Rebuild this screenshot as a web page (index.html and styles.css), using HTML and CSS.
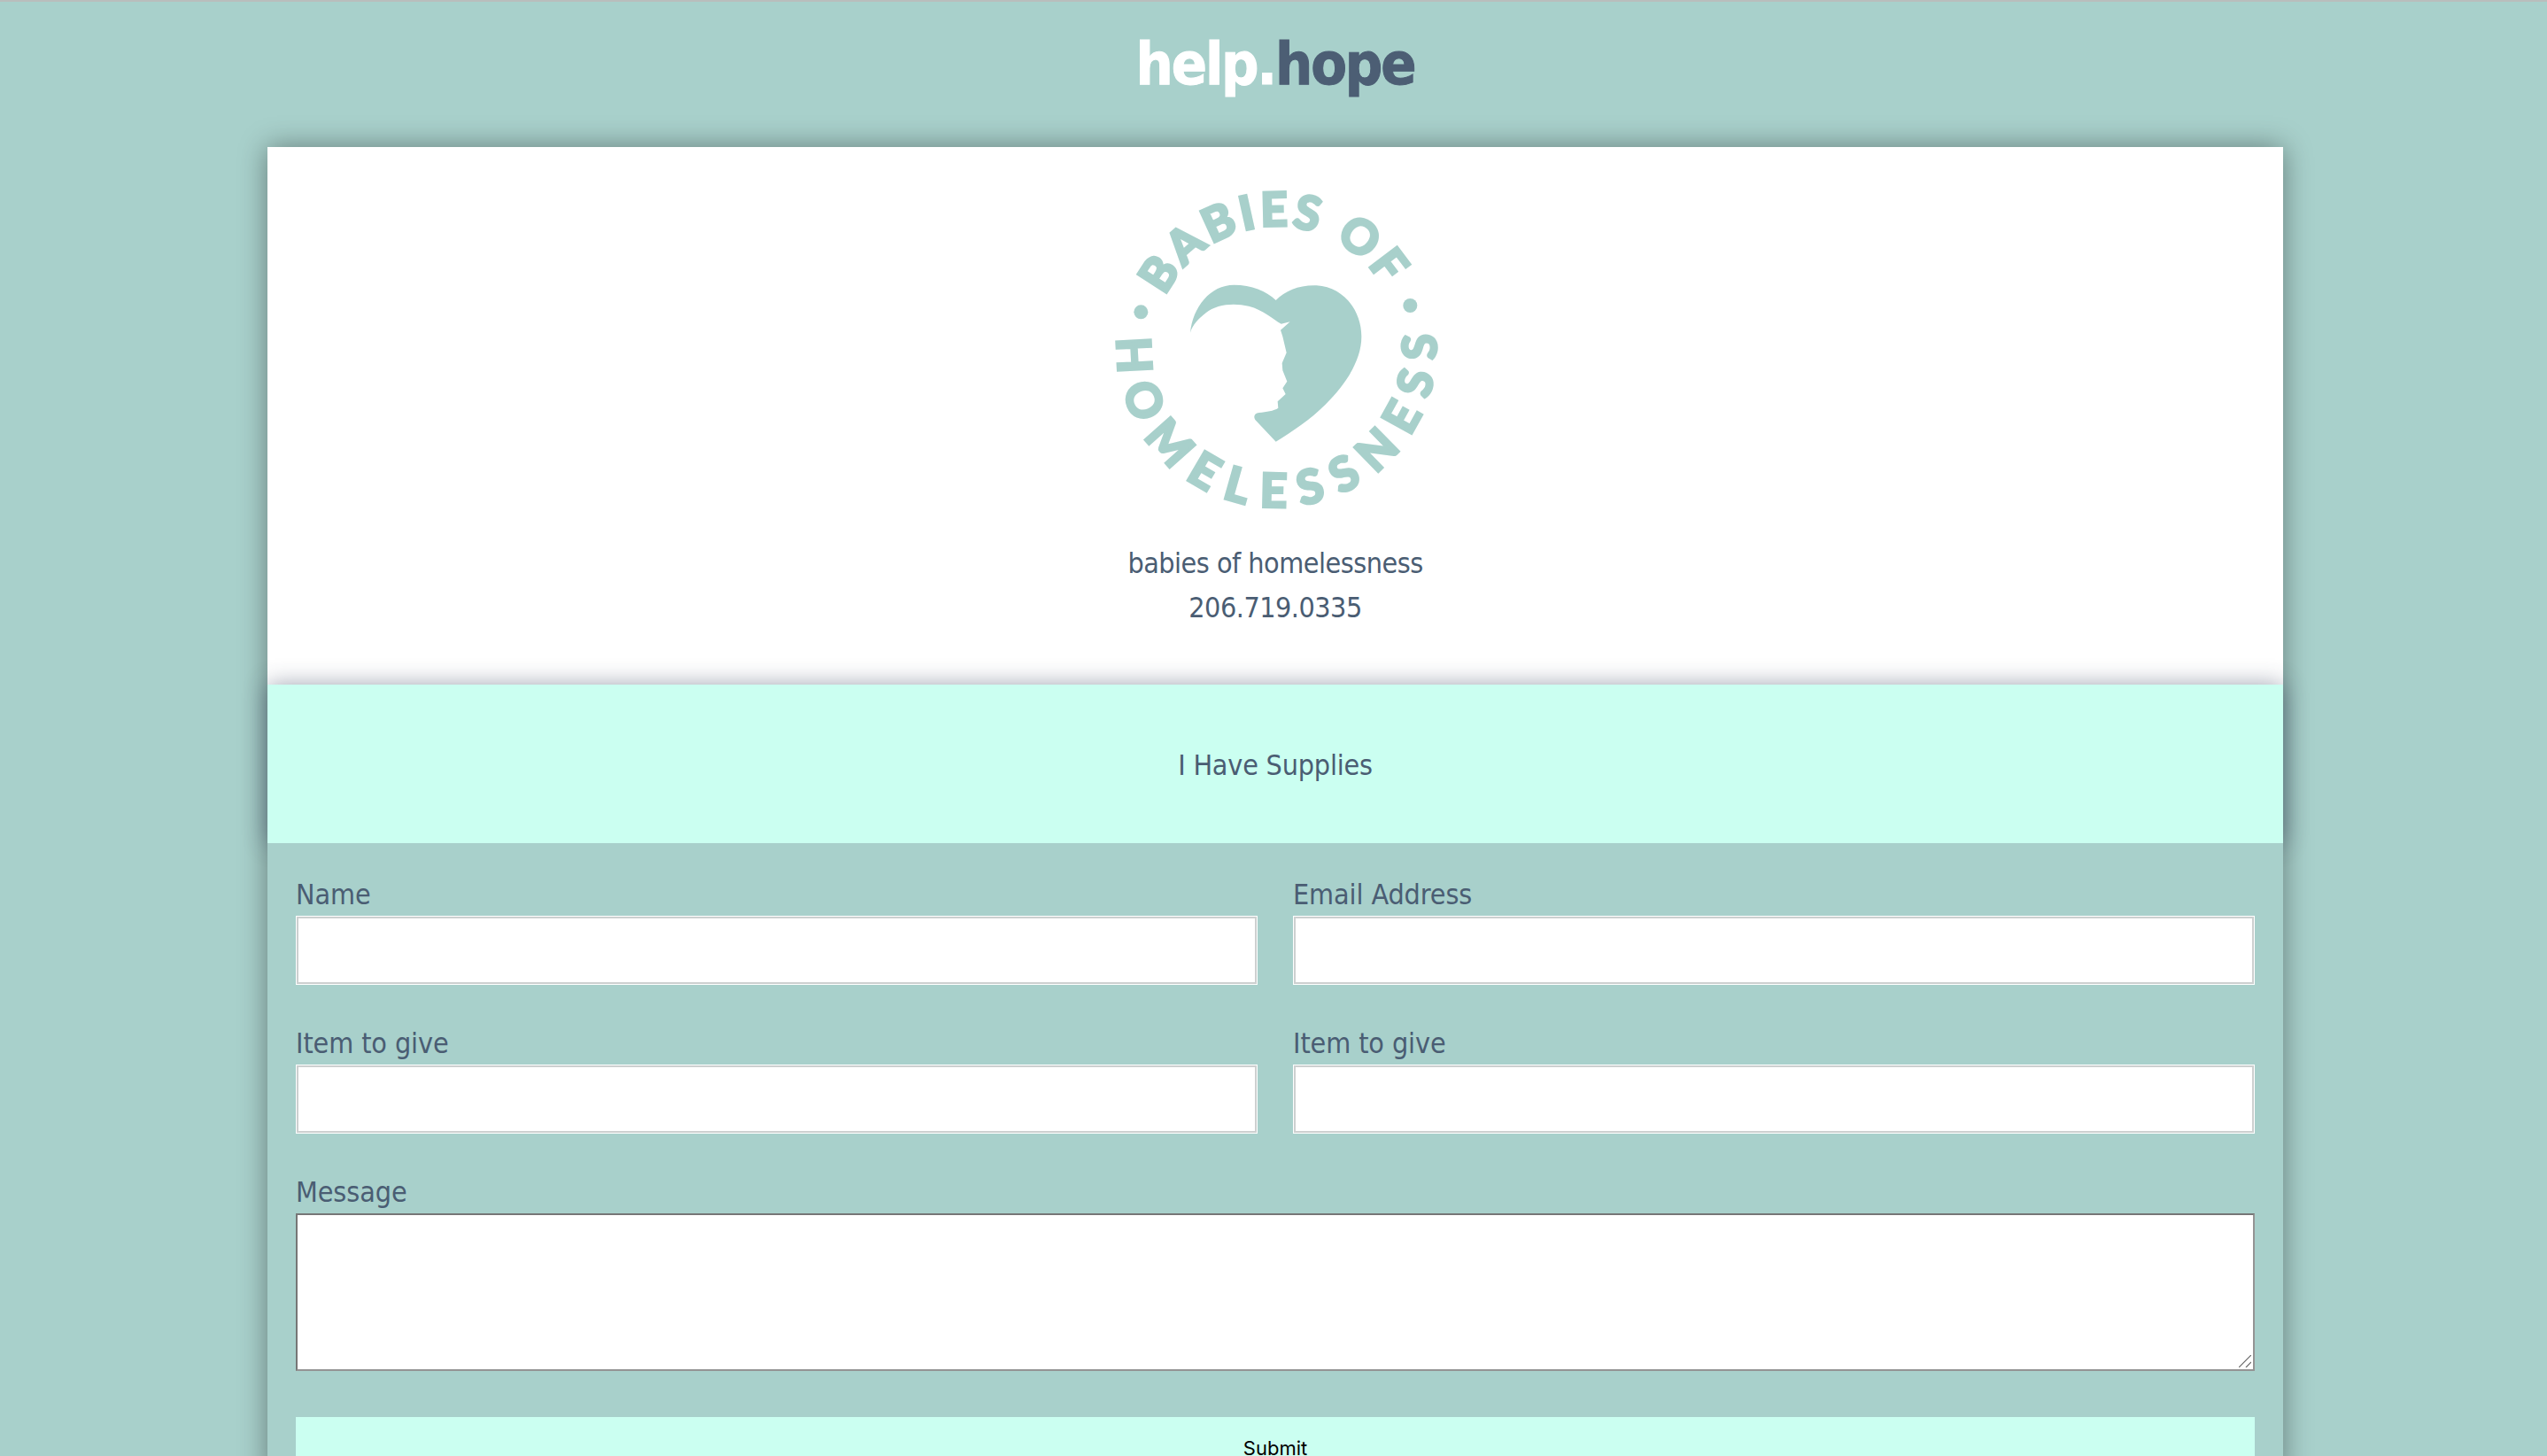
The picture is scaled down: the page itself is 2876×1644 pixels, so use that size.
FILE: index.html
```html
<!DOCTYPE html>
<html lang="en">
<head>
<meta charset="utf-8">
<title>help.hope</title>
<link rel="stylesheet" href="styles.css">
</head>
<body>
<header class="site-header"><h1 class="brand"><span class="brand-light">help.</span><span class="brand-dark">hope</span></h1></header>
<main class="card">
  <section class="org">
    <svg class="logo" viewBox="30 0 1200 1200" aria-label="Babies of Homelessness logo">
      <defs>
        <path id="arc-top" d="M257 433A420 420 0 0 1 995 399"/>
        <path id="arc-bottom" d="M96 575A540 540 0 1 0 1174 575"/>
      </defs>
      <text class="logo-text"><textPath href="#arc-top" textLength="903" lengthAdjust="spacing">BABIES OF</textPath></text>
      <text class="logo-text"><textPath href="#arc-bottom" textLength="1776" lengthAdjust="spacing">HOMELESSNESS</textPath></text>
      <circle class="logo-mark" cx="175" cy="487" r="24"/>
      <circle class="logo-mark" cx="1087" cy="465" r="24"/>
      <path class="logo-mark" d="M342 557C350 470 410 395 490 395C550 395 600 415 632 447C665 415 710 395 770 397C860 402 922 480 922 570C922 650 870 730 800 800C750 850 690 890 632 926L562 852C555 840 560 830 575 828C600 825 625 822 640 812L638 790L665 765L655 745L670 722L655 685L653 660L668 625L655 570L648 548L680 520L650 527C620 510 590 480 540 467C490 455 430 460 395 490C370 510 350 530 342 557Z"/>
    </svg>
    <p class="org-name">babies of homelessness</p>
    <p class="org-phone">206.719.0335</p>
  </section>
  <section class="band">I Have Supplies</section>
  <form class="form">
    <div class="field"><label class="label" for="f-name">Name</label><input class="input" id="f-name" type="text"></div>
    <div class="field"><label class="label" for="f-email">Email Address</label><input class="input" id="f-email" type="text"></div>
    <div class="field"><label class="label" for="f-item1">Item to give</label><input class="input" id="f-item1" type="text"></div>
    <div class="field"><label class="label" for="f-item2">Item to give</label><input class="input" id="f-item2" type="text"></div>
    <div class="field field-wide">
      <label class="label" for="f-msg">Message</label>
      <div class="textarea-wrap">
        <textarea class="textarea" id="f-msg"></textarea>
        <svg class="grip" viewBox="0 0 14 14" aria-hidden="true"><path d="M0 14L14 0M8 14L14 8"/></svg>
      </div>
    </div>
    <button class="submit" type="button">Submit</button>
  </form>
</main>
</body>
</html>
```
FILE: styles.css
```css
* { box-sizing: border-box; }
html, body { margin: 0; height: 1644px; overflow: hidden; }
body {
  background: #a8d0cb;
  border-top: 2px solid #b9bdbc;
  padding-left: 4px;
  font-family: "DejaVu Sans Condensed", "DejaVu Sans", sans-serif;
  color: #4a5d73;
}
.site-header { height: 164px; display: flex; justify-content: center; }
.brand {
  margin: 30px 0 0;
  font-size: 66px;
  line-height: 82px;
  font-weight: 700;
  height: 82px;
  letter-spacing: -2.1px;
  -webkit-text-stroke: 1px currentColor;
}
.brand-light { color: #fff; }
.brand-dark { color: #4c5e74; }
.card {
  width: 2276px;
  margin: 0 auto;
  background: #a8d0cb;
  box-shadow: 0 0 30px rgba(0, 0, 0, 0.4);
}
.org {
  background: #fff;
  height: 607px;
  padding-top: 24px;
  display: flex;
  flex-direction: column;
  align-items: center;
}
.logo { width: 400px; height: 400px; display: block; }
.logo-mark { fill: #a8d0cb; }
.logo-text {
  fill: #a8d0cb;
  stroke: #a8d0cb;
  stroke-width: 10px;
  font-family: "Lato", sans-serif;
  font-weight: 700;
  font-size: 158px;
}
.org-name, .org-phone { margin: 0; font-size: 32px; line-height: 50px; letter-spacing: -0.5px; }
.org-name { margin-top: 21px; }
.band {
  height: 179px;
  padding-top: 2px;
  background: #cbfff1;
  display: flex;
  align-items: center;
  justify-content: center;
  font-size: 32px;
  letter-spacing: -0.2px;
  box-shadow: 0 0 25px rgba(40, 50, 80, 0.45);
  position: relative;
}
.form {
  position: relative;
  background: #a8d0cb;
  padding: 40px 32px 0;
  display: grid;
  grid-template-columns: 1fr 1fr;
  column-gap: 40px;
  row-gap: 48px;
}
.field { display: flex; flex-direction: column; }
.field-wide { grid-column: 1 / -1; }
.label { font-size: 32px; line-height: 36px; height: 42px; letter-spacing: -0.1px; }
.input {
  height: 78px;
  width: 100%;
  background: #fff;
  border: 1px solid #fff;
  box-shadow: inset 0 0 0 2px #cdd0d0;
  padding: 0 8px;
}
.textarea-wrap { position: relative; height: 178px; }
.textarea {
  height: 178px;
  width: 100%;
  display: block;
  background: #fff;
  border: 2px solid;
  border-color: #767676 #949494 #949494 #767676;
  padding: 4px;
  resize: none;
}
.grip {
  position: absolute;
  right: 4px;
  bottom: 4px;
  width: 14px;
  height: 14px;
}
.grip path { fill: none; stroke: #666; stroke-width: 1.2; }
.submit {
  grid-column: 1 / -1;
  margin-top: 4px;
  height: 70px;
  background: #cbfff1;
  border: 0;
  color: #000;
  font-family: "Inter", "Liberation Sans", sans-serif;
  font-size: 22px;
}
```
